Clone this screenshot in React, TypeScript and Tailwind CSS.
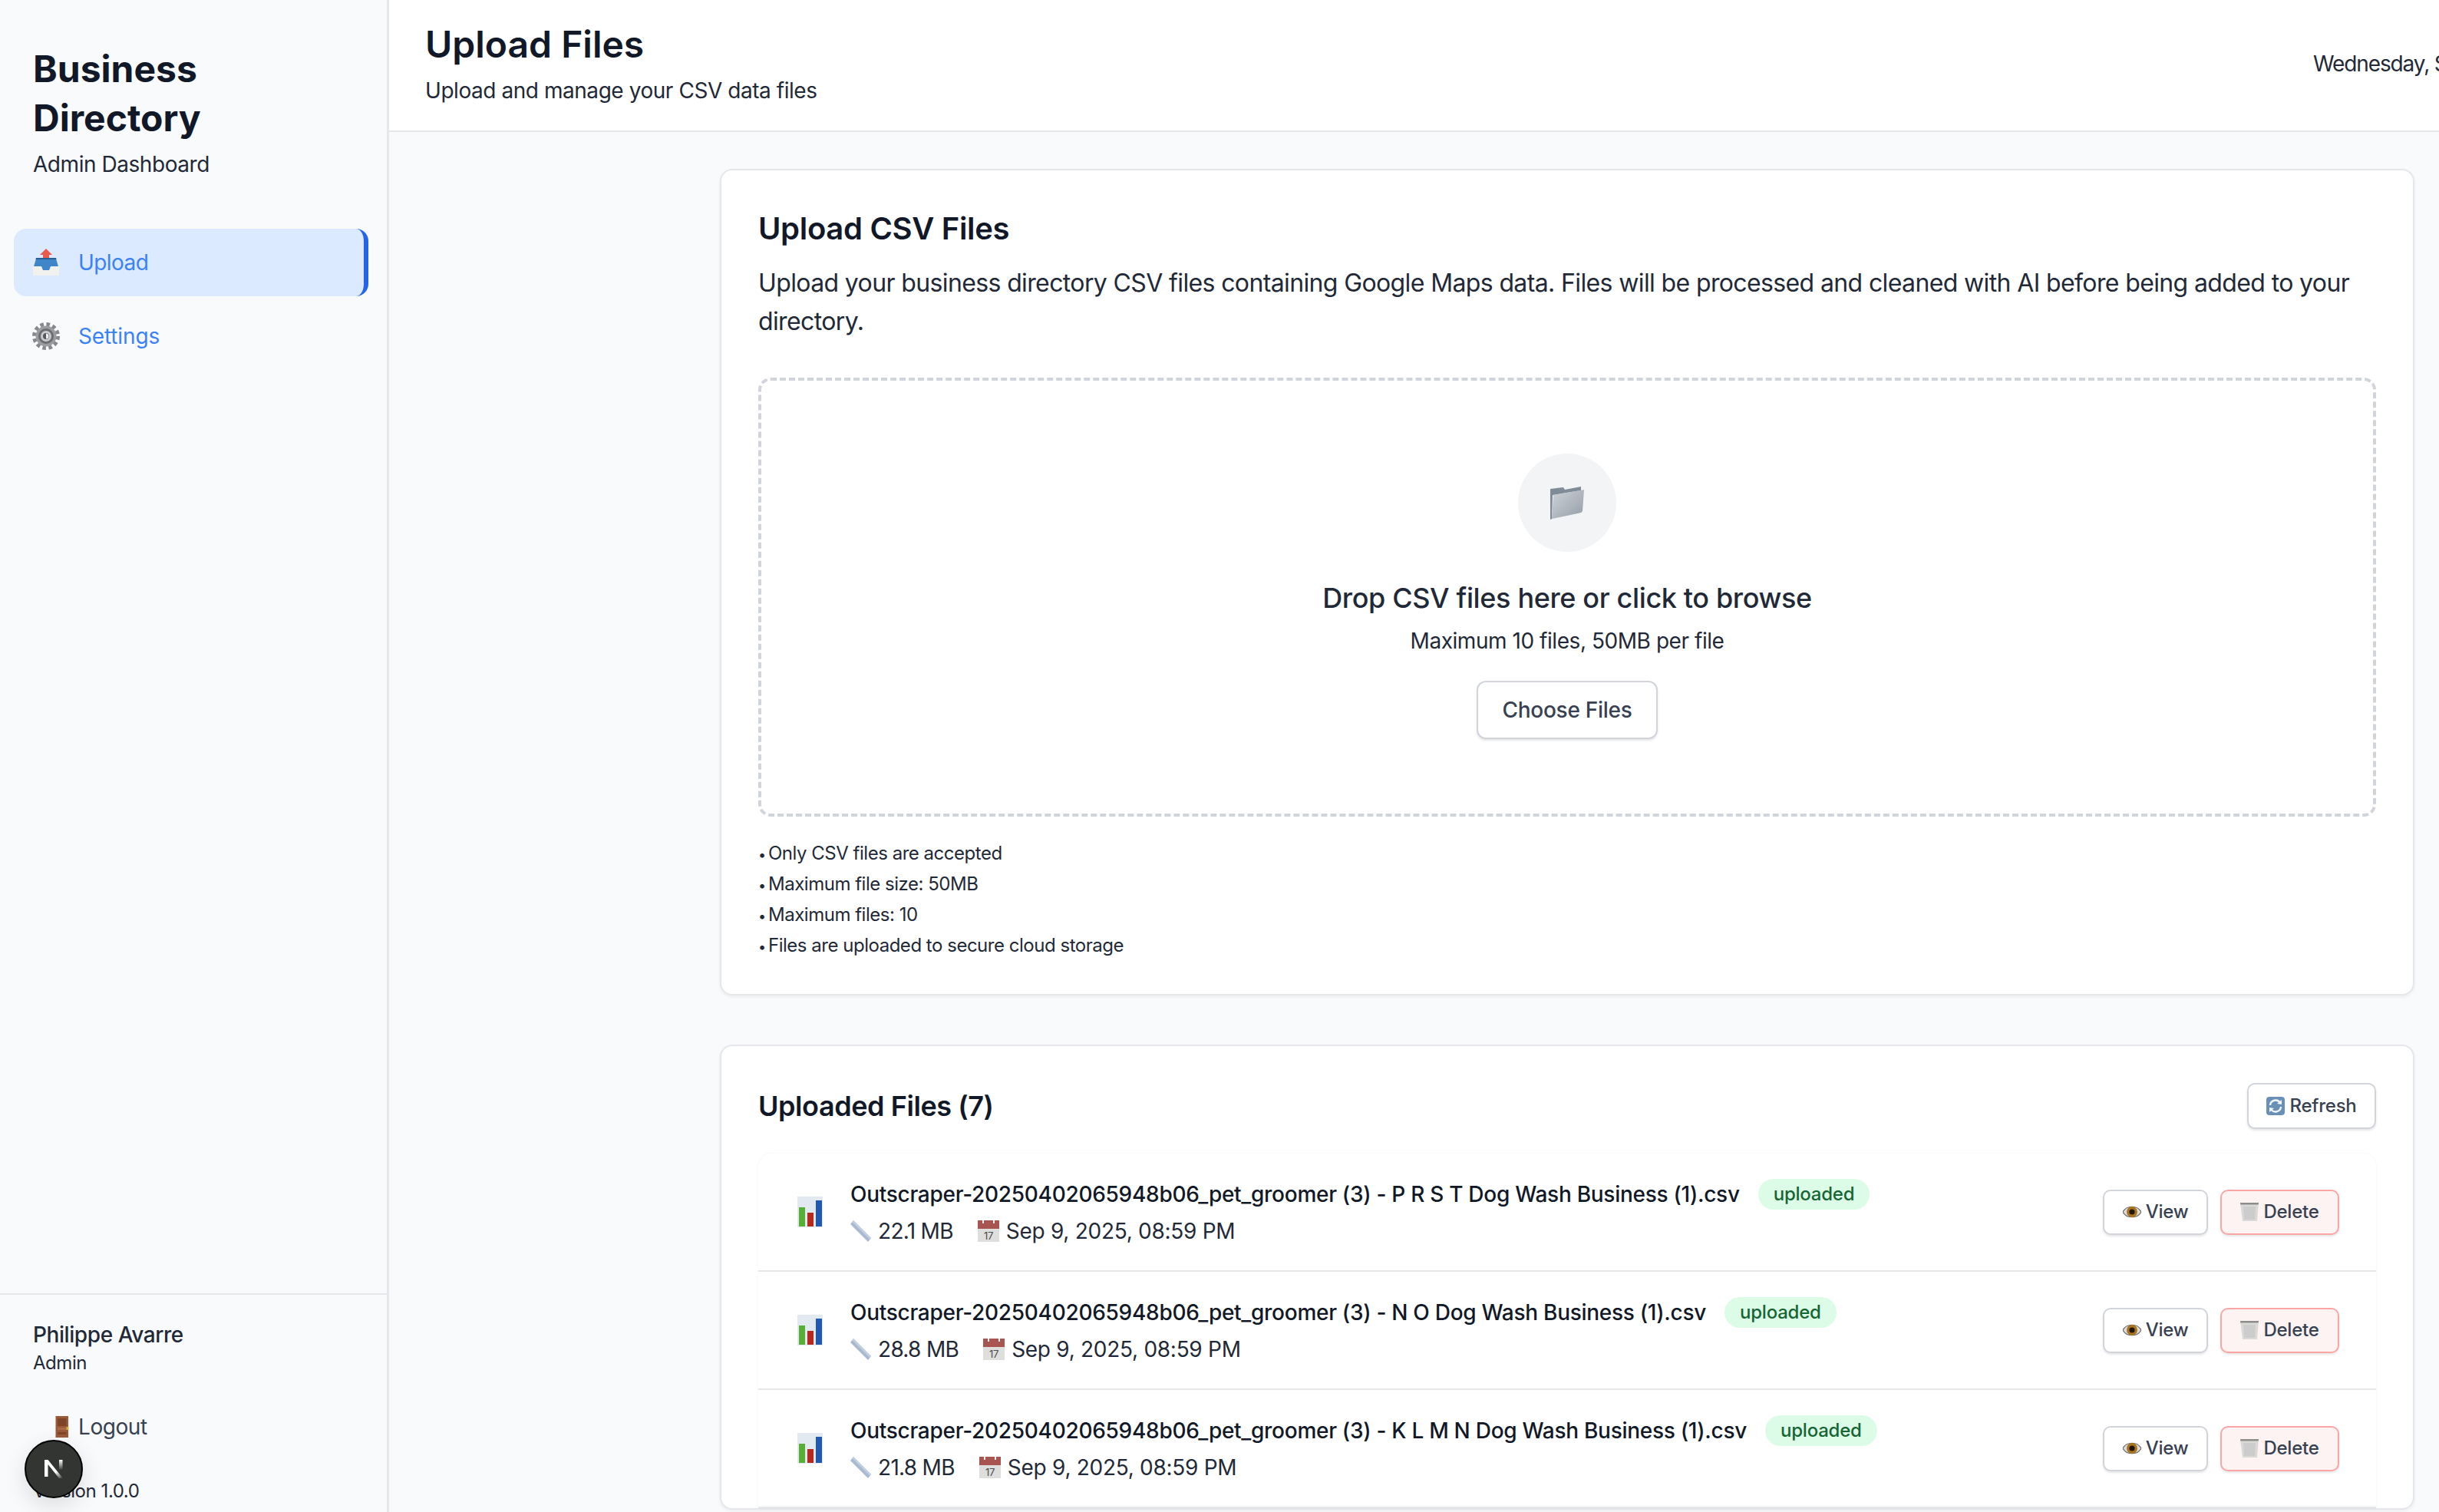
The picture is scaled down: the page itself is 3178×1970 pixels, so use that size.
import type { ReactNode } from 'react'

const InboxIcon = () => (
  <svg viewBox="0 0 36 36" className="w-[36px] h-[36px] shrink-0">
    <path d="M18 0 L26 8 L22 8 L22 13 L14 13 L14 8 L10 8 Z" fill="#ea5b4c" />
    <path d="M5 12 L31 12 L35 24 L35 35 L1 35 L1 24 Z" fill="#f1f1ee" />
    <path d="M5 13 L31 13 L34 23 L24 23 L22 28 L14 28 L12 23 L2 23 Z" fill="#3f86c9" />
    <path d="M5 12 L31 12 L31.6 14 L4.4 14 Z" fill="#2a5f96" />
  </svg>
)

const GearIcon = () => (
  <svg viewBox="0 0 36 36" className="w-[36px] h-[36px] shrink-0">
    <circle cx="18" cy="18" r="15" fill="none" stroke="#85888c" strokeWidth="6" strokeDasharray="4.4 3.45" />
    <circle cx="18" cy="18" r="13.5" fill="#9a9c9f" />
    <circle cx="18" cy="18" r="10" fill="#6b6d71" />
    <circle cx="18" cy="18" r="7" fill="#c9cacc" />
    <circle cx="18" cy="18" r="4" fill="#55575a" />
    <path d="M18 14.5 A3.5 3.5 0 0 1 18 21.5 Z" fill="#eeeeee" />
  </svg>
)

const DoorIcon = () => (
  <svg viewBox="0 0 18 28" className="w-[18px] h-[28px] shrink-0">
    <rect x="0.5" y="0" width="16.5" height="28" fill="#9a5a3a" />
    <rect x="3" y="3" width="11.5" height="10" fill="#7f4529" />
    <rect x="3" y="15" width="11.5" height="3" fill="#a86a48" />
    <rect x="3" y="21" width="11.5" height="3" fill="#7f4529" />
    <rect x="14.5" y="14" width="3" height="4" fill="#d8b13c" />
  </svg>
)

const FolderIcon = () => (
  <svg viewBox="0 0 46 44" className="w-[46px] h-[44px]">
    <defs>
      <linearGradient id="folderFront" x1="0" y1="0" x2="1" y2="1">
        <stop offset="0" stopColor="#ced3d8" />
        <stop offset="1" stopColor="#949ea8" />
      </linearGradient>
    </defs>
    <path d="M1 4 L18 2 L20 5 L41 1 L41 6 L4 12 L3 43 L1 44 Z" fill="#7f8b96" />
    <path d="M5 12 L45 5 L43 33 L41 35 L3 43 Z" fill="url(#folderFront)" />
  </svg>
)

const ChartIcon = () => (
  <svg viewBox="0 0 33 40" className="w-[33px] h-[40px] shrink-0">
    <rect x="0" y="0" width="33" height="40" fill="#e3e9f1" />
    <rect x="2" y="14" width="8" height="25" fill="#56b034" />
    <rect x="13" y="21" width="8" height="18" fill="#b52a1e" />
    <rect x="24" y="5" width="8" height="34" fill="#2059b5" />
  </svg>
)

const RulerIcon = () => (
  <svg viewBox="0 0 27 28" className="w-[27px] h-[28px] shrink-0">
    <path d="M4 0 L27 23 L23 28 L0 5 Z" fill="#a9bad0" />
    <path d="M4 0 L27 23 L25.5 25 L2.5 2 Z" fill="#c3d0e0" />
  </svg>
)

const CalendarIcon = () => (
  <svg viewBox="0 0 28 28" className="w-[28px] h-[28px] shrink-0">
    <rect x="0" y="0" width="28" height="28" fill="#dededc" />
    <rect x="0" y="0" width="28" height="11" fill="#a85450" />
    <rect x="6" y="0" width="2" height="4" fill="#f4f4f4" />
    <rect x="20" y="0" width="2" height="4" fill="#f4f4f4" />
    <text x="14" y="25" textAnchor="middle" fontSize="13" fontFamily="Inter, sans-serif" fill="#4b4b4b">17</text>
  </svg>
)

const RefreshIcon = () => (
  <svg viewBox="0 0 24 24" className="w-[24px] h-[24px] shrink-0">
    <rect x="0" y="0" width="24" height="24" rx="4" fill="#6a90b8" />
    <path d="M5 11 A7 7 0 0 1 18 8" fill="none" stroke="#f2f5f8" strokeWidth="2.4" />
    <path d="M19 13 A7 7 0 0 1 6 16" fill="none" stroke="#f2f5f8" strokeWidth="2.4" />
    <path d="M20 4 L20 10 L14 9 Z" fill="#f2f5f8" />
    <path d="M4 20 L4 14 L10 15 Z" fill="#f2f5f8" />
  </svg>
)

const EyeIcon = () => (
  <svg viewBox="0 0 24 20" className="w-[24px] h-[20px] shrink-0">
    <path d="M0 10 C5 1 19 1 24 10 C19 19 5 19 0 10 Z" fill="#dcdcdc" stroke="#6b6b6b" strokeWidth="1.2" />
    <circle cx="12" cy="10" r="7" fill="#a8741d" />
    <circle cx="12" cy="10" r="3.6" fill="#231508" />
  </svg>
)

const TrashIcon = () => (
  <svg viewBox="0 0 24 26" className="w-[24px] h-[26px] shrink-0">
    <path d="M0 1 L24 1 L22 25 L3 25 Z" fill="#d9dad8" />
    <path d="M0 1 L24 1 L23.7 3.5 L0.3 3.5 Z" fill="#8c8d8b" />
    <path d="M4 6 L20 6 L19 23 L5 23 Z" fill="#cbcccb" />
  </svg>
)

function Button({ children, danger }: { children: ReactNode; danger?: boolean }) {
  return (
    <button
      className={`h-[59px] flex items-center justify-center gap-[6px] rounded-[10px] border-[2px] text-[24px] tracking-[-0.01em] font-medium text-[#374151] shadow-[0_2px_3px_rgba(0,0,0,0.1)] ${
        danger ? 'w-[155px] bg-[#fdf3f2] border-[#fca5a5]' : 'w-[137px] bg-white border-[#d1d5db]'
      }`}
    >
      {children}
    </button>
  )
}

const files = [
  { name: 'Outscraper-20250402065948b06_pet_groomer (3) - P R S T Dog Wash Business (1).csv', size: '22.1 MB' },
  { name: 'Outscraper-20250402065948b06_pet_groomer (3) - N O Dog Wash Business (1).csv', size: '28.8 MB' },
  { name: 'Outscraper-20250402065948b06_pet_groomer (3) - K L M N Dog Wash Business (1).csv', size: '21.8 MB' },
]

const notes = [
  'Only CSV files are accepted',
  'Maximum file size: 50MB',
  'Maximum files: 10',
  'Files are uploaded to secure cloud storage',
]

export default function App() {
  return (
    <div className="flex h-[1970px] w-[3178px] overflow-hidden bg-[#f9fafb] font-['Inter',sans-serif] text-[#1f2937] tracking-[-0.028em]">
      {/* Sidebar */}
      <aside className="relative w-[507px] shrink-0 flex flex-col border-r-[3px] border-[#e5e7eb] bg-[#f9fafb]">
        <div className="px-[43px] pt-[58px]">
          <h1 className="text-[48px] leading-[64px] font-bold tracking-normal text-[#111827]">Business Directory</h1>
          <p className="mt-[8px] text-[28px] leading-[40px] text-[#1f2937]">Admin Dashboard</p>
        </div>
        <nav className="mt-[64px] px-[18px] flex flex-col gap-[8px]">
          <div className="w-[462px] h-[88px] pl-[24px] flex items-center gap-[24px] bg-[#dbeafe] rounded-[16px] border-r-[6px] border-[#2563eb] text-[28px] tracking-[-0.02em] text-[#3b82f6]">
            <InboxIcon />
            <span>Upload</span>
          </div>
          <div className="w-[462px] h-[88px] pl-[24px] flex items-center gap-[24px] text-[28px] tracking-[-0.005em] text-[#3b82f6]">
            <GearIcon />
            <span>Settings</span>
          </div>
        </nav>
        <div className="mt-auto border-t-[2px] border-[#e5e7eb] px-[43px] pt-[34px] h-[285px]">
          <p className="text-[28px] leading-[36px] tracking-[-0.015em] font-medium text-[#1f2937]">Philippe Avarre</p>
          <p className="mt-[2px] text-[24px] leading-[34px] text-[#1f2937]">Admin</p>
          <div className="mt-[48px] ml-[29px] flex items-center gap-[12px] text-[28px] leading-[36px] text-[#374151]">
            <DoorIcon />
            <span>Logout</span>
          </div>
          <p className="mt-[50px] text-[24px] leading-[32px] text-[#1f2937]">Version 1.0.0</p>
        </div>
        {/* Next.js dev badge */}
        <div className="absolute left-[32px] top-[1876px] w-[76px] h-[76px] rounded-full bg-[#333533] border-[2px] border-black shadow-[0_10px_30px_rgba(0,0,0,0.12)] flex items-center justify-center">
          <svg viewBox="0 0 24 24" className="w-[24px] h-[24px]">
            <defs>
              <linearGradient id="nFade" x1="0.2" y1="0" x2="1" y2="1">
                <stop offset="0.6" stopColor="#ffffff" />
                <stop offset="1" stopColor="#ffffff" stopOpacity="0" />
              </linearGradient>
              <linearGradient id="nBar" x1="0" y1="0" x2="0" y2="1">
                <stop offset="0" stopColor="#ffffff" />
                <stop offset="0.75" stopColor="#ffffff" stopOpacity="0" />
              </linearGradient>
            </defs>
            <path d="M0 0 H4.5 L24 24 H19 L4.5 6 V22 H0 Z" fill="url(#nFade)" />
            <rect x="19" y="0" width="4.5" height="18" fill="url(#nBar)" />
          </svg>
        </div>
      </aside>

      {/* Main column runs past the right edge of the window */}
      <main className="w-[3070px] shrink-0 flex flex-col">
        <header className="h-[172px] shrink-0 bg-white border-b-[2px] border-[#e5e7eb] pl-[47px] flex justify-between">
          <div className="pt-[28px]">
            <h2 className="text-[48px] leading-[60px] font-semibold tracking-normal text-[#111827]">Upload Files</h2>
            <p className="mt-[10px] text-[28px] leading-[40px] text-[#1f2937]">Upload and manage your CSV data files</p>
          </div>
          <div className="w-[563px] pt-[63px] text-[28px] leading-[40px] tracking-[-0.04em] text-[#1f2937] whitespace-nowrap">
            Wednesday, September 10, 2025
          </div>
        </header>

        <div className="w-[2208px] mx-auto pt-[48px] flex flex-col gap-[64px]">
          {/* Upload card */}
          <section className="h-[1077px] bg-white rounded-[16px] border-[2px] border-[#e5e7eb] shadow-[0_2px_4px_rgba(0,0,0,0.06)] px-[48px] pt-[48px]">
            <h3 className="text-[40px] leading-[56px] font-semibold tracking-[-0.008em] text-[#111827]">Upload CSV Files</h3>
            <p className="mt-[18px] text-[32px] leading-[50px] tracking-[-0.0195em] text-[#1f2937]">
              Upload your business directory CSV files containing Google Maps data. Files will be processed and cleaned with AI before being added to your directory.
            </p>
            <div className="mt-[48px] h-[572px] rounded-[16px] border-[4px] border-dashed border-[#d1d5db] flex flex-col items-center pt-[95px]">
              <div className="w-[128px] h-[128px] rounded-full bg-[#f3f4f6] flex items-center justify-center">
                <FolderIcon />
              </div>
              <p className="mt-[36px] text-[36px] leading-[48px] font-medium tracking-[-0.01em] text-[#1f2937]">Drop CSV files here or click to browse</p>
              <p className="mt-[12px] text-[28px] leading-[40px] tracking-[-0.016em] text-[#1f2937]">Maximum 10 files, 50MB per file</p>
              <button className="mt-[32px] w-[236px] h-[76px] rounded-[12px] border-[2px] border-[#d1d5db] bg-white text-[28px] font-medium tracking-[-0.01em] text-[#374151] shadow-[0_2px_3px_rgba(0,0,0,0.1)]">
                Choose Files
              </button>
            </div>
            <ul className="mt-[28px] text-[24px] leading-[40px] tracking-[-0.02em] text-[#1f2937]">
              {notes.map(n => (
                <li key={n}>
                  <span className="inline-block w-[13px] text-[18px] leading-none">•</span>
                  {n}
                </li>
              ))}
            </ul>
          </section>

          {/* Uploaded files */}
          <section className="bg-white rounded-[16px] border-[2px] border-[#e5e7eb] shadow-[0_2px_4px_rgba(0,0,0,0.06)] px-[48px] pt-[48px]">
            <div className="flex items-center justify-between h-[60px]">
              <h3 className="text-[36px] leading-[54px] font-semibold tracking-[-0.012em] text-[#111827]">Uploaded Files (7)</h3>
              <button className="w-[168px] h-[60px] flex items-center justify-center gap-[6px] rounded-[10px] border-[2px] border-[#d1d5db] bg-white text-[24px] font-medium tracking-[-0.01em] text-[#374151] shadow-[0_2px_3px_rgba(0,0,0,0.1)]">
                <RefreshIcon />
                Refresh
              </button>
            </div>
            <div className="mt-[32px] rounded-t-[16px] shadow-[0_0_2px_rgba(0,0,0,0.08)]">
              {files.map(f => (
                <div key={f.name} className="h-[154px] border-b-[2px] border-[#e5e7eb] pl-[51px] pr-[48px] flex items-center">
                  <ChartIcon />
                  <div className="ml-[36px] flex-1 min-w-0 pt-[2px]">
                    <div className="flex items-center gap-[24px]">
                      <span className="text-[28px] leading-[40px] font-medium tracking-[-0.01em] text-[#111827]">{f.name}</span>
                      <span className="h-[40px] px-[20px] flex items-center rounded-full bg-[#dcfce7] text-[24px] font-medium tracking-[-0.01em] text-[#166534]">uploaded</span>
                    </div>
                    <div className="mt-[8px] flex items-center gap-[32px] text-[28px] leading-[40px] tracking-[-0.025em] text-[#1f2937]">
                      <span className="flex items-center gap-[9px]"><RulerIcon />{f.size}</span>
                      <span className="flex items-center gap-[9px] tracking-[-0.01em]"><CalendarIcon />Sep 9, 2025, 08:59 PM</span>
                    </div>
                  </div>
                  <div className="flex items-center gap-[16px]">
                    <Button><EyeIcon />View</Button>
                    <Button danger><TrashIcon />Delete</Button>
                  </div>
                </div>
              ))}
            </div>
          </section>
        </div>
      </main>
    </div>
  )
}
